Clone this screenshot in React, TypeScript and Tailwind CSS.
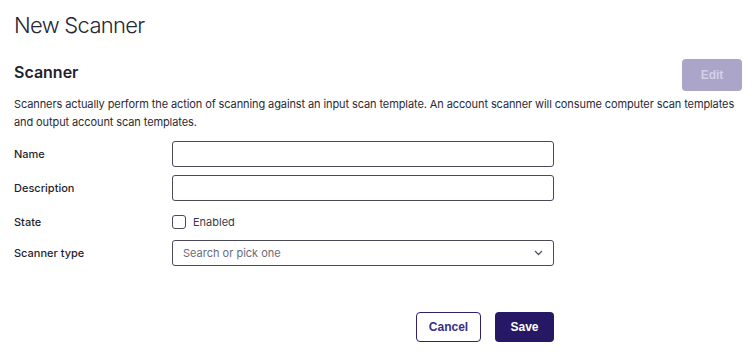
export default function App() {
  return (
    <div className="w-[754px] h-[355px] bg-white text-[#1f1f2e] px-[14px] pt-[10px]" style={{ fontFamily: "Inter, 'Noto Sans', sans-serif" }}>
      <h1 className="text-[22px] font-light leading-[30px] tracking-[-0.7px] text-[#262636]">New Scanner</h1>
      <div className="flex items-center justify-between mt-[19px]">
        <h2 className="text-[16px] font-semibold leading-[20px] mt-[-7px]">Scanner</h2>
        <button className="w-[60px] h-[32px] mr-[-2px] rounded-[4px] bg-[#aba6c9] text-[#d3d0e6] text-[12px] font-bold" style={{ fontFamily: "'Liberation Sans', Arial, sans-serif" }}>Edit</button>
      </div>
      <p className="mt-[4px] text-[11px] leading-[18px] tracking-[-0.1px] text-[#2a2a36] pr-[4px]">
        Scanners actually perform the action of scanning against an input scan template. An account scanner will consume computer scan templates and output account scan templates.
      </p>
      <div className="mt-[10px] flex flex-col">
        <div className="flex items-center h-[26px]">
          <label className="w-[158px] text-[11px] font-medium">Name</label>
          <input className="w-[382px] h-[26px] border border-[#4a4a5a] rounded-[3px] outline-none" />
        </div>
        <div className="flex items-center h-[26px] mt-[8px]">
          <label className="w-[158px] text-[11px] font-medium">Description</label>
          <input className="w-[382px] h-[26px] border border-[#4a4a5a] rounded-[3px] outline-none" />
        </div>
        <div className="flex items-center h-[39px] pt-[3px]">
          <label className="w-[158px] text-[11px] font-medium">State</label>
          <span className="w-[14px] h-[14px] border border-[#4a4a5a] rounded-[3px]"></span>
          <span className="ml-[7px] text-[11px] text-[#3a3a48]">Enabled</span>
        </div>
        <div className="flex items-center h-[26px]">
          <label className="w-[158px] text-[11px] font-medium">Scanner type</label>
          <div className="w-[382px] h-[26px] border border-[#4a4a5a] rounded-[3px] flex items-center justify-between px-[10px]">
            <span className="text-[11px] text-[#6b6b7b]">Search or pick one</span>
            <svg width="9" height="6" viewBox="0 0 9 6" fill="none" stroke="#555566" strokeWidth="1.3"><path d="M1 1l3.5 3.5L8 1" /></svg>
          </div>
        </div>
      </div>
      <div className="flex justify-end gap-[14px] mt-[46px] w-[540px]" style={{ fontFamily: "'Liberation Sans', Arial, sans-serif" }}>
        <button className="w-[65px] h-[30px] border border-[#2e2170] rounded-[4px] text-[12px] font-bold text-[#3a2f80]">Cancel</button>
        <button className="w-[59px] h-[30px] rounded-[4px] bg-[#261865] text-[12px] font-bold text-white">Save</button>
      </div>
    </div>
  )
}
